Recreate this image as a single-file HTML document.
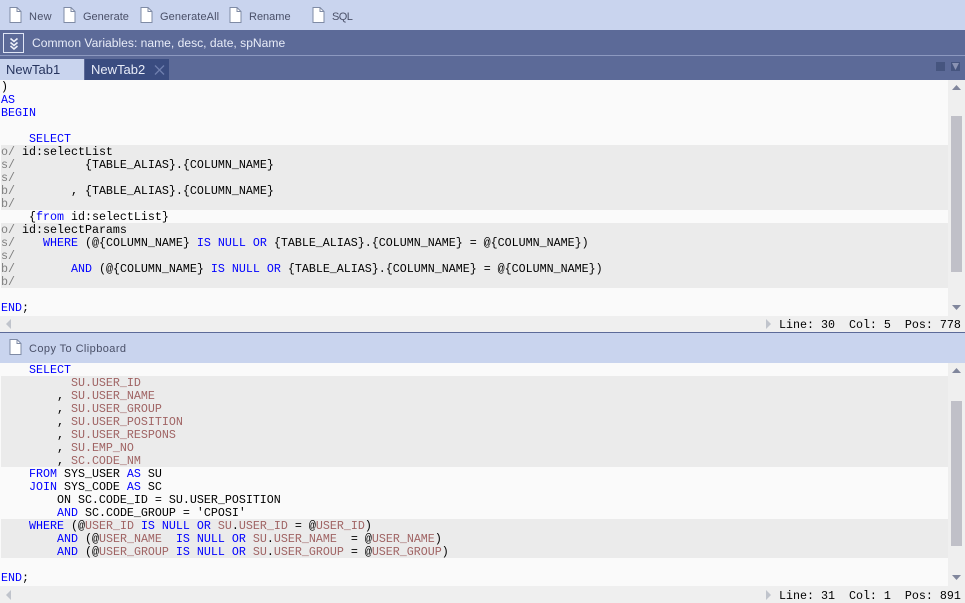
<!DOCTYPE html>
<html><head><meta charset="utf-8"><style>
html,body{margin:0;padding:0;width:965px;height:603px;overflow:hidden;background:#fafafa}
div,span.a,svg{position:absolute}
.bar{left:0;width:965px;background:#c9d4ee}
.tb{font:11px/14px "Liberation Sans",sans-serif;color:#4a5068;white-space:pre}
.l{font:11.67px/13px "Liberation Mono",monospace;color:#000;white-space:pre;height:13px;margin-top:1px}
.k{color:#0000ff}.r{color:#a06464}.g{color:#808080}
.gr{left:1px;width:947px;background:#ebebeb}
.sb{background:#efefef}
.th{background:#c0c0c8;left:951px;width:11px}
.st{font:11.67px/13px "Liberation Mono",monospace;color:#000;white-space:pre;left:779px}
</style></head><body>
<svg width="0" height="0" style="left:0;top:0"><defs><symbol id="f" viewBox="0 0 13 16"><path d="M1 .5H8L12 4.500V15.500H1Z" fill="#fff" stroke="#7f8ba5"/><path d="M8 .5V4.500H12" fill="none" stroke="#7f8ba5"/></symbol></defs></svg>

<div class="bar" style="top:0;height:30px"></div>
<svg style="left:9px;top:7px" width="13" height="16"><use href="#f"/></svg><div class="tb" style="left:29px;top:10px;letter-spacing:.3px">New</div>
<svg style="left:63px;top:7px" width="13" height="16"><use href="#f"/></svg><div class="tb" style="left:83px;top:10px">Generate</div>
<svg style="left:140px;top:7px" width="13" height="16"><use href="#f"/></svg><div class="tb" style="left:160px;top:10px;letter-spacing:.1px">GenerateAll</div>
<svg style="left:229px;top:7px" width="13" height="16"><use href="#f"/></svg><div class="tb" style="left:249px;top:10px">Rename</div>
<svg style="left:312px;top:7px" width="13" height="16"><use href="#f"/></svg><div class="tb" style="left:332px;top:10px;letter-spacing:-.6px">SQL</div>

<div style="left:0;top:30px;width:965px;height:50px;background:#5c6a98"></div>
<div style="left:0;top:55px;width:965px;height:1px;background:#8d99c0"></div>
<div style="left:3px;top:33px;width:19px;height:18px;border:1px solid #dfe5f5"></div>
<svg style="left:3px;top:33px" width="21" height="20"><path d="M7.500 5.500L11 8.500L14.500 5.500M7.500 9.500L11 12.500L14.500 9.500M7.500 13L11 16L14.500 13" fill="none" stroke="#eef1fa" stroke-width="1.600"/></svg>
<div style="left:32px;top:36px;font:12.100px/15px 'Liberation Sans',sans-serif;color:#e8ecf8;white-space:pre">Common Variables: name, desc, date, spName</div>

<div style="left:0;top:59px;width:84px;height:21px;background:#c9d4ee"></div>
<div style="left:6px;top:62px;font:13px/15px 'Liberation Sans',sans-serif;color:#26345e;white-space:pre">NewTab1</div>
<div style="left:85px;top:59px;width:84px;height:21px;background:#3a4c80"></div>
<div style="left:91px;top:62px;font:13px/15px 'Liberation Sans',sans-serif;color:#e8ecf8;white-space:pre">NewTab2</div>
<svg style="left:153px;top:64px" width="12" height="12"><path d="M2 1.500L11 10.500M11 1.500L2 10.500" stroke="#6f7fae" stroke-width="1.300" fill="none"/></svg>
<div style="left:936px;top:62px;width:9px;height:9px;background:#46557f"></div>
<div style="left:951px;top:62px;width:9px;height:9px;background:#46557f"></div>
<svg style="left:951px;top:62px" width="9" height="9"><path d="M1 1H8L4.500 8Z" fill="#8a93b3"/></svg>

<!-- pane 1 -->
<div class="gr" style="top:145px;height:65px"></div>
<div class="gr" style="top:223px;height:65px"></div>
<div class="sb" style="left:948px;top:80px;width:17px;height:236px"></div>
<div class="th" style="top:116px;height:156px"></div>
<svg style="left:951px;top:85px" width="11" height="6"><path d="M5.500 0L10 5H1Z" fill="#80869c"/></svg>
<svg style="left:951px;top:305px" width="11" height="6"><path d="M1 0H10L5.500 5Z" fill="#80869c"/></svg>
<div class="sb" style="left:0;top:316px;width:965px;height:16px"></div>
<svg style="left:5px;top:319px" width="7" height="10"><path d="M6 0V10L1 5Z" fill="#c0c4cc"/></svg>
<svg style="left:765px;top:319px" width="7" height="10"><path d="M1 0V10L6 5Z" fill="#c0c4cc"/></svg>
<div class="st" style="top:319px">Line: 30  Col: 5  Pos: 778</div>
<div style="left:0;top:332px;width:965px;height:1px;background:#5c6a98"></div>

<div class="l" style="left:1px;top:80px">)</div>
<div class="l k" style="left:1px;top:93px">AS</div>
<div class="l k" style="left:1px;top:106px">BEGIN</div>
<div class="l k" style="left:1px;top:132px">    SELECT</div>
<div class="l" style="left:1px;top:145px"><span class="g">o/</span> id:selectList</div>
<div class="l" style="left:1px;top:158px"><span class="g">s/</span>          {TABLE_ALIAS}.{COLUMN_NAME}</div>
<div class="l g" style="left:1px;top:171px">s/</div>
<div class="l" style="left:1px;top:184px"><span class="g">b/</span>        , {TABLE_ALIAS}.{COLUMN_NAME}</div>
<div class="l g" style="left:1px;top:197px">b/</div>
<div class="l" style="left:1px;top:210px">    {<span class="k">from</span> id:selectList}</div>
<div class="l" style="left:1px;top:223px"><span class="g">o/</span> id:selectParams</div>
<div class="l" style="left:1px;top:236px"><span class="g">s/</span>    <span class="k">WHERE</span> (@{COLUMN_NAME} <span class="k">IS NULL OR</span> {TABLE_ALIAS}.{COLUMN_NAME} = @{COLUMN_NAME})</div>
<div class="l g" style="left:1px;top:249px">s/</div>
<div class="l" style="left:1px;top:262px"><span class="g">b/</span>        <span class="k">AND</span> (@{COLUMN_NAME} <span class="k">IS NULL OR</span> {TABLE_ALIAS}.{COLUMN_NAME} = @{COLUMN_NAME})</div>
<div class="l g" style="left:1px;top:275px">b/</div>
<div class="l" style="left:1px;top:301px"><span class="k">END</span>;</div>

<!-- pane 2 toolbar -->
<div class="bar" style="top:333px;height:30px"></div>
<svg style="left:9px;top:339px" width="13" height="16"><use href="#f"/></svg>
<div class="tb" style="left:29px;top:342px;letter-spacing:.42px">Copy To Clipboard</div>

<div class="gr" style="top:376px;height:91px"></div>
<div class="gr" style="top:519px;height:39px"></div>
<div class="sb" style="left:948px;top:363px;width:17px;height:223px"></div>
<div class="th" style="top:401px;height:145px"></div>
<svg style="left:951px;top:368px" width="11" height="6"><path d="M5.500 0L10 5H1Z" fill="#80869c"/></svg>
<svg style="left:951px;top:575px" width="11" height="6"><path d="M1 0H10L5.500 5Z" fill="#80869c"/></svg>
<div class="sb" style="left:0;top:586px;width:965px;height:17px"></div>
<svg style="left:5px;top:590px" width="7" height="10"><path d="M6 0V10L1 5Z" fill="#c0c4cc"/></svg>
<svg style="left:765px;top:590px" width="7" height="10"><path d="M1 0V10L6 5Z" fill="#c0c4cc"/></svg>
<div class="st" style="top:590px">Line: 31  Col: 1  Pos: 891</div>

<div class="l k" style="left:1px;top:363px">    SELECT</div>
<div class="l r" style="left:1px;top:376px">          SU.USER_ID</div>
<div class="l" style="left:1px;top:389px">        , <span class="r">SU.USER_NAME</span></div>
<div class="l" style="left:1px;top:402px">        , <span class="r">SU.USER_GROUP</span></div>
<div class="l" style="left:1px;top:415px">        , <span class="r">SU.USER_POSITION</span></div>
<div class="l" style="left:1px;top:428px">        , <span class="r">SU.USER_RESPONS</span></div>
<div class="l" style="left:1px;top:441px">        , <span class="r">SU.EMP_NO</span></div>
<div class="l" style="left:1px;top:454px">        , <span class="r">SC.CODE_NM</span></div>
<div class="l" style="left:1px;top:467px">    <span class="k">FROM</span> SYS_USER <span class="k">AS</span> SU</div>
<div class="l" style="left:1px;top:480px">    <span class="k">JOIN</span> SYS_CODE <span class="k">AS</span> SC</div>
<div class="l" style="left:1px;top:493px">        ON SC.CODE_ID = SU.USER_POSITION</div>
<div class="l" style="left:1px;top:506px">        <span class="k">AND</span> SC.CODE_GROUP = 'CPOSI'</div>
<div class="l" style="left:1px;top:519px">    <span class="k">WHERE</span> (@<span class="r">USER_ID</span> <span class="k">IS NULL OR</span> <span class="r">SU</span>.<span class="r">USER_ID</span> = @<span class="r">USER_ID</span>)</div>
<div class="l" style="left:1px;top:532px">        <span class="k">AND</span> (@<span class="r">USER_NAME</span>  <span class="k">IS NULL OR</span> <span class="r">SU</span>.<span class="r">USER_NAME</span>  = @<span class="r">USER_NAME</span>)</div>
<div class="l" style="left:1px;top:545px">        <span class="k">AND</span> (@<span class="r">USER_GROUP</span> <span class="k">IS NULL OR</span> <span class="r">SU</span>.<span class="r">USER_GROUP</span> = @<span class="r">USER_GROUP</span>)</div>
<div class="l" style="left:1px;top:571px"><span class="k">END</span>;</div>
</body></html>
